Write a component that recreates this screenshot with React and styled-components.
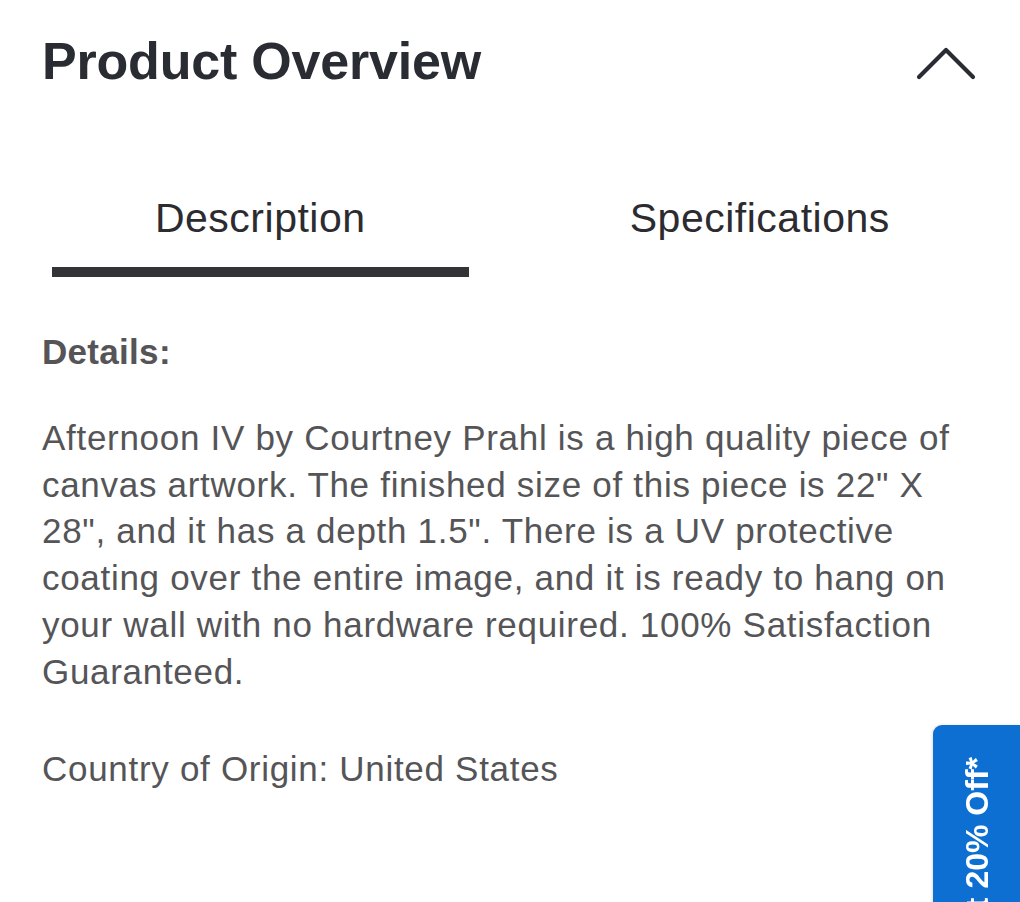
import React, { useState } from "react";
import styled, { createGlobalStyle } from "styled-components";

const GlobalStyle = createGlobalStyle`
    html, body {
        margin: 0;
        padding: 0;
        background: #ffffff;
    }
    body {
        font-family: "Liberation Sans", Arial, Helvetica, sans-serif;
        -webkit-font-smoothing: antialiased;
    }
`;

const Page = styled.div`
    width: 1020px;
    min-height: 902px;
    overflow: hidden;
`;

const Header = styled.div`
    display: flex;
    align-items: center;
    justify-content: space-between;
    padding: 32px 43px 0 42px;
`;

const Title = styled.h2`
    margin: 0;
    font-size: 52px;
    line-height: 58px;
    font-weight: 700;
    color: #2a2c33;
    letter-spacing: -0.2px;
`;

const Toggle = styled.button`
    display: flex;
    border: none;
    background: none;
    padding: 0;
    cursor: pointer;
    margin-top: 2px;
`;

const Tabs = styled.div`
    display: grid;
    grid-template-columns: 1fr 1fr;
    column-gap: 83px;
    padding: 0 52px;
    margin-top: 105px;
`;

const Tab = styled.button`
    border: none;
    background: none;
    padding: 0;
    font-family: inherit;
    font-size: 41px;
    line-height: 47px;
    letter-spacing: 0.5px;
    color: #2b2b30;
    text-align: center;
    cursor: pointer;

    &::after {
        content: "";
        display: block;
        height: 10px;
        margin-top: 25px;
        background: ${p => (p.$active ? "#333338" : "transparent")};
    }
`;

const Content = styled.div`
    padding: 0 42px;
    color: #555558;
    font-size: 35px;
    line-height: 46.8px;
    letter-spacing: 0.7px;
`;

const Label = styled.div`
    font-weight: 700;
    letter-spacing: 0.3px;
    margin-top: 52px;
`;

const Paragraph = styled.p`
    margin: 39px 0 0;
`;

const Origin = styled.p`
    margin: 50px 0 0;
`;

const OfferTab = styled.button`
    position: fixed;
    right: 0;
    top: 725px;
    width: 87px;
    height: 220px;
    border: none;
    border-radius: 9px 0 0 0;
    background: #0c6fd1;
    box-shadow: -1px 0 3px rgba(0, 0, 0, 0.12);
    padding: 0;
    overflow: hidden;
    cursor: pointer;
`;

const OfferText = styled.span`
    position: absolute;
    left: 44px;
    top: 32px;
    transform-origin: 0 0;
    transform: rotate(-90deg) translate(-100%, -50%);
    white-space: nowrap;
    color: #ffffff;
    font-family: "Liberation Sans", Arial, sans-serif;
    font-weight: 700;
    font-size: 32px;
    line-height: 36px;
`;

function Chevron({ open }) {
    return (
        <svg width="62" height="38" viewBox="0 0 62 38" fill="none">
            <path
                d={open ? "M4 34 L31 7 L58 34" : "M4 7 L31 34 L58 7"}
                stroke="#2a2c33"
                strokeWidth="4.2"
                strokeLinecap="round"
                strokeLinejoin="round"
            />
        </svg>
    );
}

export default function App() {
    const [open, setOpen] = useState(true);
    const [tab, setTab] = useState("description");

    return (
        <Page>
            <GlobalStyle />
            <Header>
                <Title>Product Overview</Title>
                <Toggle onClick={() => setOpen(!open)} aria-label="Toggle">
                    <Chevron open={open} />
                </Toggle>
            </Header>
            {open && (
                <>
                    <Tabs>
                        <Tab $active={tab === "description"} onClick={() => setTab("description")}>
                            Description
                        </Tab>
                        <Tab $active={tab === "specifications"} onClick={() => setTab("specifications")}>
                            Specifications
                        </Tab>
                    </Tabs>
                    <Content>
                        <Label>Details:</Label>
                        <Paragraph>
                            Afternoon IV by Courtney Prahl is a high quality piece of canvas artwork. The
                            finished size of this piece is 22" X 28", and it has a depth 1.5". There is a UV
                            protective coating over the entire image, and it is ready to hang on your wall
                            with no hardware required. 100% Satisfaction Guaranteed.
                        </Paragraph>
                        <Origin>Country of Origin: United States</Origin>
                    </Content>
                </>
            )}
            <OfferTab>
                <OfferText>Get 20% Off*</OfferText>
            </OfferTab>
        </Page>
    );
}
